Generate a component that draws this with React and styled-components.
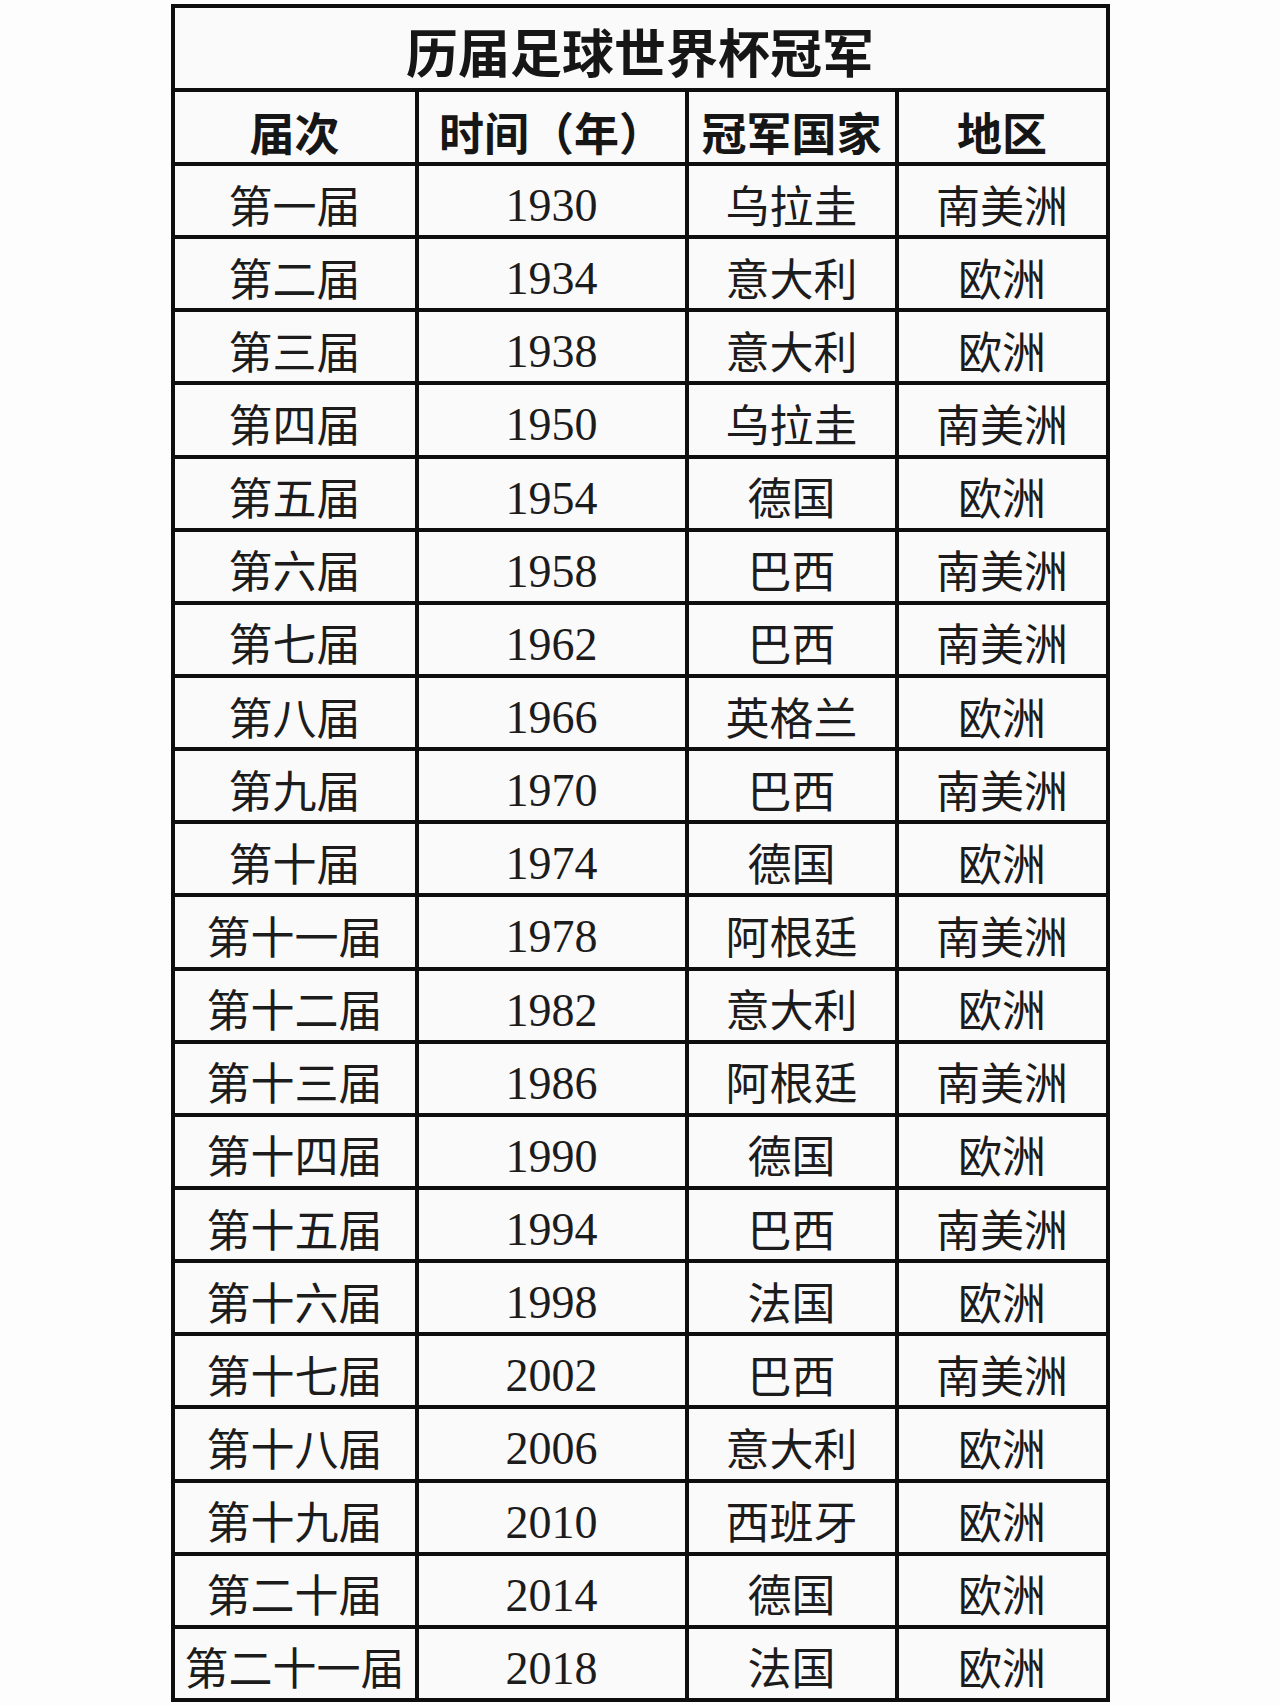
import React from 'react';
import styled, { createGlobalStyle } from 'styled-components';

const GlobalStyle = createGlobalStyle`
  html, body {
    margin: 0;
    padding: 0;
    background: #fdfdfd;
  }
  body {
    font-family: 'Noto Sans CJK SC', 'Noto Sans', sans-serif;
    color: #111;
  }
`;

const Page = styled.div`
  width: 1280px;
  min-height: 1706px;
  padding-top: 4px;
  box-sizing: border-box;
  display: flex;
  justify-content: center;
`;

const Table = styled.div`
  display: grid;
  grid-template-columns: 240px 266px 206px 207px;
  grid-template-rows: 80px 70px repeat(21, 69.15px);
  gap: 4px;
  padding: 4px;
  background: #0e0e0e;
  align-self: flex-start;
`;

const Cell = styled.div`
  background: #fbfafb;
  display: flex;
  align-items: center;
  justify-content: center;
  white-space: nowrap;
  overflow: hidden;
  font-family: ${(p) =>
    p.$num
      ? "'Liberation Serif', 'Noto Sans CJK SC', serif"
      : "'Noto Sans CJK SC', sans-serif"};
  font-size: ${(p) => (p.$num ? '46px' : '44px')};
  font-weight: 400;
  color: #1c1c1c;
  padding-top: ${(p) => (p.$num ? '10px' : '6px')};
  box-sizing: border-box;
`;

const TitleCell = styled(Cell)`
  grid-column: 1 / -1;
  font-size: 52px;
  font-weight: 700;
  color: #161616;
  padding-top: 4px;
`;

const HeadCell = styled(Cell)`
  font-size: 45px;
  font-weight: 700;
  color: #161616;
  padding-top: 8px;
`;

const headers = ['届次', '时间（年）', '冠军国家', '地区'];

const rows = [
  ['第一届', '1930', '乌拉圭', '南美洲'],
  ['第二届', '1934', '意大利', '欧洲'],
  ['第三届', '1938', '意大利', '欧洲'],
  ['第四届', '1950', '乌拉圭', '南美洲'],
  ['第五届', '1954', '德国', '欧洲'],
  ['第六届', '1958', '巴西', '南美洲'],
  ['第七届', '1962', '巴西', '南美洲'],
  ['第八届', '1966', '英格兰', '欧洲'],
  ['第九届', '1970', '巴西', '南美洲'],
  ['第十届', '1974', '德国', '欧洲'],
  ['第十一届', '1978', '阿根廷', '南美洲'],
  ['第十二届', '1982', '意大利', '欧洲'],
  ['第十三届', '1986', '阿根廷', '南美洲'],
  ['第十四届', '1990', '德国', '欧洲'],
  ['第十五届', '1994', '巴西', '南美洲'],
  ['第十六届', '1998', '法国', '欧洲'],
  ['第十七届', '2002', '巴西', '南美洲'],
  ['第十八届', '2006', '意大利', '欧洲'],
  ['第十九届', '2010', '西班牙', '欧洲'],
  ['第二十届', '2014', '德国', '欧洲'],
  ['第二十一届', '2018', '法国', '欧洲'],
];

const App = () => (
  <>
    <GlobalStyle />
    <Page>
      <Table>
        <TitleCell>历届足球世界杯冠军</TitleCell>
        {headers.map((h) => (
          <HeadCell key={h}>{h}</HeadCell>
        ))}
        {rows.map((row) =>
          row.map((text, i) => (
            <Cell key={`${row[0]}-${i}`} $num={i === 1}>
              {text}
            </Cell>
          ))
        )}
      </Table>
    </Page>
  </>
);

export default App;
